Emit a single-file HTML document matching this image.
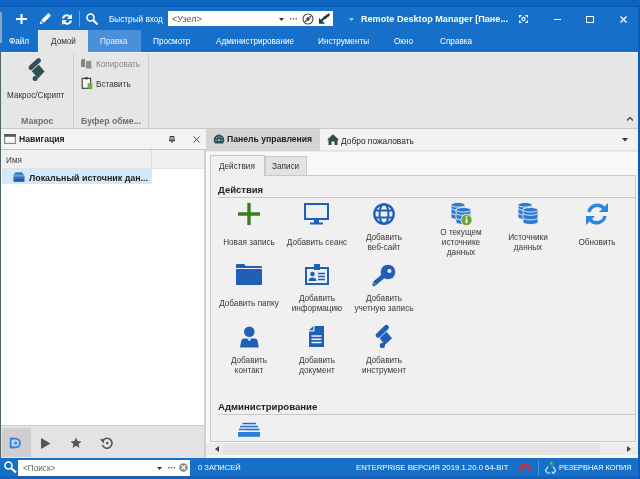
<!DOCTYPE html>
<html><head><meta charset="utf-8">
<style>
*{margin:0;padding:0;box-sizing:border-box}
html,body{width:640px;height:479px;overflow:hidden;background:#e9e9e9;font-family:"Liberation Sans",sans-serif;font-size:8.2px;color:#333}
div,svg,span{position:absolute}
.t{white-space:nowrap;line-height:10px;will-change:transform}
.w{color:#fff}
.b{font-weight:bold}
.c{text-align:center}
</style></head><body>
<!-- top strip & title bar -->
<div style="left:0;top:0;width:640px;height:7px;background:#0b63c2"></div><div style="left:0;top:6px;width:640px;height:1px;background:#0a5ab4"></div>
<div style="left:0;top:7px;width:640px;height:45px;background:#1670ca"></div>
<div style="left:0;top:12px;width:2px;height:31px;background:#8aa4c0"></div>

<!-- QAT icons -->
<svg style="left:16px;top:14px" width="11" height="10" viewBox="0 0 11 10"><path d="M5.5 0v10M0 5h11" stroke="#fff" stroke-width="2"/></svg>
<svg style="left:39px;top:13px" width="12" height="11" viewBox="0 0 12 11"><path d="M2.2 7.2L8.6 0.8a1.2 1.2 0 0 1 1.7 0l0.9 0.9a1.2 1.2 0 0 1 0 1.7L4.8 9.8z" fill="#fff"/><path d="M1.6 8L4 10.4 0.6 11z" fill="#fff"/></svg>
<svg style="left:61px;top:14px" width="12" height="11" viewBox="0 0 12 11"><path d="M2 4.5A4 4 0 0 1 9.5 3.5M10 6.5A4 4 0 0 1 2.5 7.5" stroke="#fff" stroke-width="2" fill="none"/><path d="M11 0v5h-5z M1 11v-5h5z" fill="#fff"/></svg>
<div style="left:79px;top:11px;width:1px;height:16px;background:#6aa3dc"></div>
<svg style="left:86px;top:13px" width="12" height="12" viewBox="0 0 12 12"><circle cx="4.5" cy="4.5" r="3.5" stroke="#fff" stroke-width="1.6" fill="none"/><path d="M7 7l4.5 4.5" stroke="#fff" stroke-width="2.2"/></svg>
<div class="t w" style="left:108.5px;top:14.5px">Быстрый вход</div>
<!-- combo -->
<div style="left:168px;top:11px;width:165px;height:15px;background:#fff"></div>
<div class="t" style="left:172px;top:14px;color:#555;font-size:9px">&lt;Узел&gt;</div>
<svg style="left:279px;top:17.5px" width="5" height="3"><path d="M0 0h5l-2.5 3z" fill="#333"/></svg>
<svg style="left:290px;top:18px" width="7" height="2"><path d="M0 0h1.4v1.4h-1.4zM2.8 0h1.4v1.4h-1.4zM5.6 0h1.4v1.4h-1.4z" fill="#666"/></svg>
<svg style="left:302px;top:13px" width="12" height="12" viewBox="0 0 12 12"><circle cx="6" cy="6" r="5" stroke="#444" stroke-width="1.1" fill="none"/><path d="M3.2 8.8l1.3-1.3M4 6.2a1.3 1.3 0 0 1 1.8 1.8M8.8 3.2L7.5 4.5M8 5.8a1.3 1.3 0 0 1-1.8-1.8" stroke="#222" stroke-width="1.3" fill="none"/></svg>
<svg style="left:318px;top:13px" width="12" height="11" viewBox="0 0 12 11"><path d="M11.3 1L9.5 3.2 8.8 2.8 7.5 4.6 6.8 4.3 3.8 7.6" stroke="#1f3f3f" stroke-width="2.2" fill="none"/><path d="M1 4.8v6h6z" fill="#1f3f3f"/></svg>
<svg style="left:349px;top:18px" width="5" height="3"><path d="M0 0h5l-2.5 3z" fill="#a8cdf2"/></svg>
<div class="t w b" style="left:361px;top:14px;font-size:9.1px">Remote Desktop Manager [Пане...</div>
<!-- window buttons -->
<svg style="left:519px;top:15px" width="9" height="8" viewBox="0 0 9 8"><path d="M0.6 2.6V0.6H2.6M6.4 0.6h2v2M8.4 5.4v2h-2M2.6 7.4H0.6v-2" stroke="#fff" stroke-width="1.2" fill="none"/><circle cx="4.5" cy="4" r="1.6" stroke="#fff" stroke-width="1.1" fill="none"/></svg>
<div style="left:554px;top:19px;width:7px;height:1px;background:#fff"></div>
<div style="left:586px;top:15.5px;width:7.5px;height:7.5px;border:1.2px solid #fff"></div>
<svg style="left:619.5px;top:15.5px" width="7" height="7" viewBox="0 0 7 7"><path d="M0.5 0.5l6 6M6.5 0.5l-6 6" stroke="#fff" stroke-width="1.3"/></svg>

<!-- ribbon tabs -->
<div style="left:38px;top:30px;width:50px;height:22px;background:#e6e6e6;border-left:1px solid #eaf4fd"></div>
<div style="left:88px;top:30px;width:53px;height:22px;background:#4a90d8"></div>
<div class="t w" style="left:9px;top:37px">Файл</div>
<div class="t" style="left:51px;top:37px;color:#333">Домой</div>
<div class="t" style="left:100px;top:37px;color:#e4eef9">Правка</div>
<div class="t w" style="left:153px;top:37px">Просмотр</div>
<div class="t w" style="left:215.5px;top:37px">Администрирование</div>
<div class="t w" style="left:318px;top:37px">Инструменты</div>
<div class="t w" style="left:394px;top:37px">Окно</div>
<div class="t w" style="left:439.5px;top:37px">Справка</div>

<!-- ribbon body -->
<div style="left:0;top:52px;width:638px;height:77px;background:#e6e6e6;border-bottom:1px solid #c8c8c8"></div><div style="left:0;top:52px;width:38px;height:1px;background:#eaf4fd"></div><div style="left:88px;top:52px;width:550px;height:1px;background:#eaf4fd"></div>
<svg style="left:627px;top:117px" width="6" height="4"><path d="M0 3.5L3 0.5 6 3.5" stroke="#444" stroke-width="1.3" fill="none"/></svg>

<div style="left:73px;top:54px;width:1px;height:74px;background:#cdcdcd"></div>
<div style="left:148px;top:54px;width:1px;height:74px;background:#cdcdcd"></div>
<svg style="left:24px;top:55px" width="26" height="30" viewBox="0 0 26 30"><g fill="#2e5252"><path d="M7.6 16L14.7 9.4 20.5 16.6 14 23.4z"/><circle cx="11.1" cy="23.5" r="2.5"/></g><path d="M7 12.6L14.6 5.6" stroke="#e6e6e6" stroke-width="6" stroke-linecap="round"/><path d="M7 12.6L14.6 5.6" stroke="#2e5252" stroke-width="4.8" stroke-linecap="round"/></svg>
<div class="t" style="left:7px;top:91px">Макрос/Скрипт</div>
<div class="t b" style="left:21px;top:116px;color:#707070;font-size:8.9px">Макрос</div>
<svg style="left:81px;top:59px" width="11" height="10" viewBox="0 0 11 10"><path d="M0 2a2 2 0 0 1 2-2h2v8h-4z" fill="#858585"/><path d="M4.5 3.5a2 2 0 0 1 2-2h4.3v8.4h-6.3z" fill="#8e8e8e" stroke="#e6e6e6" stroke-width="0.8"/></svg>
<div class="t" style="left:96px;top:60px;color:#888">Копировать</div>
<svg style="left:81px;top:77px" width="12" height="12" viewBox="0 0 12 12"><rect x="1.2" y="1.3" width="8.4" height="10" fill="#f4f4f4" stroke="#3a3a3a" stroke-width="1.1"/><rect x="3.8" y="0.3" width="3.2" height="2" fill="#3a3a3a"/><rect x="6.6" y="6.2" width="4.8" height="5.4" fill="#6ab440"/></svg>
<div class="t" style="left:96px;top:80px;color:#333">Вставить</div>
<div class="t b" style="left:81px;top:116px;color:#707070;font-size:8.7px">Буфер обме...</div>

<!-- navigation panel -->
<div style="left:0;top:129px;width:204px;height:329px;background:#fff"></div>
<div style="left:0;top:129px;width:206px;height:21px;background:#f3f3f3;border-bottom:1px solid #c4c4c4"></div>
<svg style="left:4px;top:134px" width="12" height="10" viewBox="0 0 12 10"><rect x="0.6" y="1" width="10.8" height="8.4" fill="#fafafa" stroke="#8a8a8a" stroke-width="1.2"/><rect x="0" y="0" width="12" height="2.8" fill="#5a5a5a"/></svg>
<div class="t b" style="left:19px;top:134px;color:#222;font-size:8.6px">Навигация</div>
<svg style="left:169px;top:136px" width="6" height="7" viewBox="0 0 6 7"><path d="M1 0.5h4v3.8h-4z" fill="none" stroke="#333" stroke-width="1"/><path d="M0 4.2h6v1h-6z" fill="#333"/><path d="M2.5 5h1v2h-1z" fill="#333"/><path d="M3 0.5v3.8" stroke="#333" stroke-width="0.8"/></svg>
<svg style="left:193px;top:136px" width="7" height="7" viewBox="0 0 7 7"><path d="M0.5 0.5l6 6M6.5 0.5l-6 6" stroke="#444" stroke-width="1"/></svg>
<div style="left:0;top:150px;width:204px;height:19px;background:#f0f0f0;border-bottom:1px solid #e2e2e2"></div>
<div style="left:151px;top:150px;width:1px;height:19px;background:#dcdcdc"></div>
<div class="t" style="left:6px;top:156px;color:#444">Имя</div>
<div style="left:2px;top:169px;width:150px;height:15px;background:#d3e9f9"></div>
<svg style="left:13px;top:172px" width="12" height="10" viewBox="0 0 12 10"><path d="M2.5 0.3h6.5l2.5 3.5h-11.5z" fill="#4a86cc"/><path d="M3 1.5h6" stroke="#2a5fa8" stroke-width="0.6"/><rect x="0.5" y="4.3" width="11" height="5.5" fill="#1f5bb0"/><rect x="0.5" y="5.6" width="11" height="0.6" fill="#6fa0dc"/></svg>
<div class="t b" style="left:29px;top:173px;color:#222;font-size:8.9px">Локальный источник дан...</div>
<div style="left:0;top:425px;width:204px;height:33px;background:#e3e3e3;border-top:1px solid #cdcdcd"></div>
<div style="left:2px;top:428px;width:29px;height:29px;background:#cfcfcf"></div>
<svg style="left:9px;top:437px" width="13" height="12" viewBox="0 0 13 12"><path d="M1.6 1.6h5a4.4 4.4 0 0 1 0 8.8h-5z" fill="#b5d5f5" stroke="#3a80d8" stroke-width="1.8"/><circle cx="6.6" cy="6" r="1.5" fill="#3a80d8"/><path d="M1.6 1.6h3M1.6 10.4h3" stroke="#3a80d8" stroke-width="1.8"/></svg>
<svg style="left:41px;top:438px" width="10" height="11" viewBox="0 0 10 11"><path d="M0 0l9.5 5.5-9.5 5.5z" fill="#555"/></svg>
<svg style="left:70px;top:437px" width="12" height="12" viewBox="0 0 24 24"><path d="M12 1l3.2 7.2 7.8.7-5.9 5.2 1.8 7.7-6.9-4.1-6.9 4.1 1.8-7.7-5.9-5.2 7.8-.7z" fill="#555"/></svg>
<svg style="left:100px;top:437px" width="13" height="12" viewBox="0 0 13 12"><path d="M3 3.2A5 5 0 1 1 2.3 8" stroke="#555" stroke-width="1.6" fill="none"/><path d="M0 2l4.5 0.5-1 4z" fill="#555"/><circle cx="7.3" cy="6" r="1.3" fill="#555"/></svg>

<!-- splitter -->
<div style="left:204px;top:150px;width:2px;height:308px;background:#cfcfcf"></div>

<!-- dashboard -->
<div style="left:206px;top:129px;width:432px;height:22px;background:#f2f2f2;border-bottom:1px solid #e2e2e2"></div>
<div style="left:206px;top:129px;width:114px;height:22px;background:#d4d4d4"></div>
<svg style="left:213px;top:134px" width="12" height="10" viewBox="0 0 12 10"><path d="M2.2 9.6A5.3 5.3 0 1 1 9.8 9.6z" fill="#2a5252"/><g fill="#bfe0e0"><circle cx="6" cy="6.3" r="1"/><rect x="2.3" y="5.8" width="1.5" height="0.9"/><rect x="8.2" y="5.8" width="1.5" height="0.9"/><rect x="5.5" y="2.3" width="1" height="1.2"/><rect x="3.2" y="3.3" width="1" height="1"/><rect x="7.8" y="3.3" width="1" height="1"/></g></svg>
<div class="t b" style="left:227px;top:134px;color:#222;font-size:8.65px">Панель управления</div>
<svg style="left:327px;top:134px" width="12" height="11" viewBox="0 0 12 11"><path d="M6 0.3L11.7 5.6 10.5 6.4 10.5 11 7.5 11 7.5 7.6 4.5 7.6 4.5 11 1.5 11 1.5 6.4 0.3 5.6z" fill="#2a4f4f"/></svg>
<div class="t" style="left:341px;top:136px;color:#222;font-size:8.4px">Добро пожаловать</div>
<svg style="left:622px;top:138px" width="6" height="4"><path d="M0 0h6l-3 3.5z" fill="#333"/></svg>

<div style="left:206px;top:152px;width:432px;height:306px;background:#f8f8f8"></div>
<!-- tab control -->
<div style="left:210px;top:175px;width:426px;height:267px;background:#f0f0f0;border:1px solid #c8c8c8"></div>
<div style="left:265px;top:156px;width:42px;height:20px;background:#e2e2e2;border:1px solid #c8c8c8"></div>
<div style="left:210px;top:155px;width:55px;height:21px;background:#f0f0f0;border:1px solid #c8c8c8;border-bottom:none"></div>
<div class="t" style="left:219px;top:162px;color:#333">Действия</div>
<div class="t" style="left:272px;top:162px;color:#333">Записи</div>

<div class="t b" style="left:218px;top:185px;color:#222;font-size:9.5px">Действия</div>
<div style="left:218px;top:197px;width:417px;height:1px;background:#c8c8c8"></div>

<!-- row1 icons -->
<svg style="left:238px;top:203px" width="22" height="22" viewBox="0 0 22 22"><path d="M11 0v22M0 11h22" stroke="#3a7f1f" stroke-width="3.4"/></svg>
<svg style="left:304px;top:203px" width="25" height="22" viewBox="0 0 25 22"><rect x="1" y="1" width="23" height="15" fill="none" stroke="#1f5fb8" stroke-width="2"/><rect x="10" y="17" width="5" height="3" fill="#1f5fb8"/><rect x="6" y="19.5" width="13" height="2" fill="#1f5fb8"/></svg>
<svg style="left:373px;top:203px" width="22" height="22" viewBox="0 0 22 22"><circle cx="11" cy="11" r="9.7" fill="none" stroke="#1f5fb8" stroke-width="2.3"/><ellipse cx="11" cy="11" rx="4.5" ry="9.7" fill="none" stroke="#1f5fb8" stroke-width="2"/><path d="M2 7.5h18M2 14.5h18" stroke="#1f5fb8" stroke-width="2"/></svg>
<svg style="left:449px;top:201px" width="26" height="26" viewBox="0 0 26 26"><path d="M2 13.00v3.2a7.0 2.3 0 0 0 14 0v-3.2a7.0 2.3 0 0 0 -14 0z" fill="#2a7ad0" stroke="#f0f0f0" stroke-width="0.9"/><path d="M2 8.40v3.2a7.0 2.3 0 0 0 14 0v-3.2a7.0 2.3 0 0 0 -14 0z" fill="#2a7ad0" stroke="#f0f0f0" stroke-width="0.9"/><path d="M2 3.80v3.2a7.0 2.3 0 0 0 14 0v-3.2a7.0 2.3 0 0 0 -14 0z" fill="#2a7ad0" stroke="#f0f0f0" stroke-width="0.9"/><ellipse cx="9.0" cy="3.80" rx="7.0" ry="2.3" fill="#2a7ad0" stroke="#f0f0f0" stroke-width="0.9"/><path d="M7 18.00v3.2a7.5 2.3 0 0 0 15 0v-3.2a7.5 2.3 0 0 0 -15 0z" fill="#2a7ad0" stroke="#f0f0f0" stroke-width="0.9"/><path d="M7 13.40v3.2a7.5 2.3 0 0 0 15 0v-3.2a7.5 2.3 0 0 0 -15 0z" fill="#2a7ad0" stroke="#f0f0f0" stroke-width="0.9"/><path d="M7 8.80v3.2a7.5 2.3 0 0 0 15 0v-3.2a7.5 2.3 0 0 0 -15 0z" fill="#2a7ad0" stroke="#f0f0f0" stroke-width="0.9"/><ellipse cx="14.5" cy="8.80" rx="7.5" ry="2.3" fill="#2a7ad0" stroke="#f0f0f0" stroke-width="0.9"/><circle cx="17.5" cy="19" r="6" fill="#f0f0f0"/><circle cx="17.5" cy="19" r="5.2" fill="#6aa632"/><rect x="16.7" y="17.6" width="1.7" height="4.4" fill="#fff"/><rect x="16.7" y="15.3" width="1.7" height="1.5" fill="#fff"/></svg>
<svg style="left:516px;top:201px" width="26" height="26" viewBox="0 0 26 26"><path d="M2 13.00v3.2a7.0 2.3 0 0 0 14 0v-3.2a7.0 2.3 0 0 0 -14 0z" fill="#2a7ad0" stroke="#f0f0f0" stroke-width="0.9"/><path d="M2 8.40v3.2a7.0 2.3 0 0 0 14 0v-3.2a7.0 2.3 0 0 0 -14 0z" fill="#2a7ad0" stroke="#f0f0f0" stroke-width="0.9"/><path d="M2 3.80v3.2a7.0 2.3 0 0 0 14 0v-3.2a7.0 2.3 0 0 0 -14 0z" fill="#2a7ad0" stroke="#f0f0f0" stroke-width="0.9"/><ellipse cx="9.0" cy="3.80" rx="7.0" ry="2.3" fill="#2a7ad0" stroke="#f0f0f0" stroke-width="0.9"/><path d="M7 18.00v3.2a7.5 2.3 0 0 0 15 0v-3.2a7.5 2.3 0 0 0 -15 0z" fill="#2a7ad0" stroke="#f0f0f0" stroke-width="0.9"/><path d="M7 13.40v3.2a7.5 2.3 0 0 0 15 0v-3.2a7.5 2.3 0 0 0 -15 0z" fill="#2a7ad0" stroke="#f0f0f0" stroke-width="0.9"/><path d="M7 8.80v3.2a7.5 2.3 0 0 0 15 0v-3.2a7.5 2.3 0 0 0 -15 0z" fill="#2a7ad0" stroke="#f0f0f0" stroke-width="0.9"/><ellipse cx="14.5" cy="8.80" rx="7.5" ry="2.3" fill="#2a7ad0" stroke="#f0f0f0" stroke-width="0.9"/></svg>
<svg style="left:585px;top:203px" width="24" height="22" viewBox="0 0 24 22"><path d="M4 9A8.5 8.5 0 0 1 19 5.5M20 13A8.5 8.5 0 0 1 5 16.5" stroke="#2a86de" stroke-width="3.4" fill="none"/><path d="M23 0v9h-9z M1 22v-9h9z" fill="#2a86de"/></svg>

<div class="t c" style="left:208px;top:238px;width:82px;color:#383838">Новая запись</div>
<div class="t c" style="left:276px;top:238px;width:82px;color:#383838">Добавить сеанс</div>
<div class="t c" style="left:343px;top:233px;width:82px;color:#383838">Добавить<br>веб-сайт</div>
<div class="t c" style="left:420px;top:228px;width:82px;color:#383838">О текущем<br>источнике<br>данных</div>
<div class="t c" style="left:487px;top:233px;width:82px;color:#383838">Источники<br>данных</div>
<div class="t c" style="left:556px;top:238px;width:82px;color:#383838">Обновить</div>

<!-- row2 icons -->
<svg style="left:236px;top:264px" width="26" height="21" viewBox="0 0 26 21"><path d="M0 1a1 1 0 0 1 1-1h7l2 2h15a1 1 0 0 1 1 1v1h-26z" fill="#1f5fb8"/><rect x="0" y="5" width="26" height="16" rx="1" fill="#1f5fb8"/></svg>
<svg style="left:305px;top:264px" width="24" height="21" viewBox="0 0 24 21"><rect x="1" y="4" width="22" height="16" fill="none" stroke="#1f5fb8" stroke-width="2"/><rect x="9" y="0" width="6" height="6" fill="#1f5fb8"/><circle cx="7.5" cy="10" r="2.3" fill="#1f5fb8"/><path d="M3.5 17a4 3.5 0 0 1 8 0z" fill="#1f5fb8"/><path d="M13 9.5h7M13 12.5h7M13 15.5h7" stroke="#1f5fb8" stroke-width="1.6"/></svg>
<svg style="left:368px;top:260px" width="32" height="30" viewBox="0 0 32 30"><circle cx="20" cy="12" r="7.3" fill="#1f5fb8"/><path d="M16 15.5L6.5 23.5" stroke="#1f5fb8" stroke-width="4.6"/><path d="M4.8 22.2l3.2 3.8-2.8 0.3-0.8-1z" fill="#1f5fb8"/><circle cx="21.4" cy="11" r="2.1" fill="#f0f0f0"/></svg>

<div class="t c" style="left:208px;top:299px;width:82px;color:#383838">Добавить папку</div>
<div class="t c" style="left:276px;top:294px;width:82px;color:#383838">Добавить<br>информацию</div>
<div class="t c" style="left:343px;top:294px;width:82px;color:#383838">Добавить<br>учетную запись</div>

<!-- row3 icons -->
<svg style="left:240px;top:326px" width="19" height="22" viewBox="0 0 19 22"><circle cx="9.3" cy="5.8" r="5.3" fill="#1f5fb8"/><path d="M0 21.4L1.2 15a3 3 0 0 1 3-2.4h10.4a3 3 0 0 1 3 2.4L18.8 21.4z" fill="#1f5fb8"/><path d="M7 12.6l2.3 2.6 2.3-2.6z" fill="#f0f0f0"/></svg>
<svg style="left:309px;top:326px" width="16" height="22" viewBox="0 0 16 22"><path d="M5.5 0H15v21H0V5.5h5.5z" fill="#1f5fb8"/><path d="M0 4.3L4.3 0v4.3z" fill="#1f5fb8"/><path d="M2.5 10h10M2.5 13.3h10M2.5 16.6h10" stroke="#f0f0f0" stroke-width="1.5"/></svg>
<svg style="left:370px;top:320px" width="26" height="32" viewBox="0 0 26 32"><g fill="#1f5fb8"><path d="M9.2 17.6L16.3 11.4 22 18.3 14.8 25z"/><circle cx="12.4" cy="25.4" r="2.6"/></g><path d="M8.2 15.2L16.4 7.4" stroke="#f0f0f0" stroke-width="6.2" stroke-linecap="round"/><path d="M8.2 15.2L16.4 7.4" stroke="#1f5fb8" stroke-width="5" stroke-linecap="round"/></svg>

<div class="t c" style="left:208px;top:356px;width:82px;color:#383838">Добавить<br>контакт</div>
<div class="t c" style="left:276px;top:356px;width:82px;color:#383838">Добавить<br>документ</div>
<div class="t c" style="left:343px;top:356px;width:82px;color:#383838">Добавить<br>инструмент</div>

<div class="t b" style="left:218px;top:402px;color:#222;font-size:9.6px">Администрирование</div>
<div style="left:218px;top:414px;width:417px;height:1px;background:#c8c8c8"></div>
<svg style="left:238px;top:420px" width="23" height="18" viewBox="0 0 23 18"><g fill="#2a6cbf"><rect x="4.4" y="2.8" width="13.6" height="1.5"/><rect x="2" y="5.8" width="18" height="1.5"/><rect x="0.9" y="8.7" width="20.5" height="1.5"/></g><g fill="#9cc8f0"><rect x="10" y="4.3" width="8" height="0.8"/><rect x="8" y="7.3" width="12" height="0.8"/><rect x="8" y="10.2" width="13.4" height="0.8"/></g><rect x="0" y="12" width="22" height="4.8" fill="#2a80dc"/></svg>

<!-- horizontal scrollbar -->
<div style="left:206px;top:443px;width:432px;height:12px;background:#e4e4e4"></div>
<div style="left:206px;top:443px;width:17px;height:12px;background:#ececec"></div>
<div style="left:600px;top:443px;width:38px;height:12px;background:#ececec"></div>
<svg style="left:215px;top:446px" width="4" height="6"><path d="M4 0v6l-4-3z" fill="#444"/></svg>
<svg style="left:627px;top:446px" width="4" height="6"><path d="M0 0v6l4-3z" fill="#444"/></svg>

<!-- status bar -->
<div style="left:0;top:458px;width:640px;height:21px;background:#1670ca"></div>
<div style="left:0;top:476px;width:640px;height:3px;background:#1662b8"></div>
<svg style="left:4px;top:461px" width="13" height="12" viewBox="0 0 13 12"><circle cx="4.5" cy="4.5" r="3.5" stroke="#fff" stroke-width="1.6" fill="none"/><path d="M7 7l5 4.5" stroke="#fff" stroke-width="2.2"/></svg>
<div style="left:18px;top:460px;width:172px;height:16px;background:#fff"></div>
<div class="t" style="left:23px;top:464px;color:#666">&lt;Поиск&gt;</div>
<svg style="left:157px;top:466.5px" width="5" height="3"><path d="M0 0h5l-2.5 3z" fill="#333"/></svg>
<svg style="left:168px;top:467px" width="7" height="2"><path d="M0 0h1.4v1.4h-1.4zM2.8 0h1.4v1.4h-1.4zM5.6 0h1.4v1.4h-1.4z" fill="#666"/></svg>
<svg style="left:179px;top:463px" width="9" height="9" viewBox="0 0 9 9"><circle cx="4.5" cy="4.5" r="4.3" fill="#8a8a8a"/><path d="M2.5 2.5l4 4M6.5 2.5l-4 4" stroke="#fff" stroke-width="1.2"/></svg>
<div class="t w" style="left:198px;top:463px;font-size:7.6px">0 ЗАПИСЕЙ</div>
<div class="t w" style="left:356px;top:463px;font-size:7.75px">ENTERPRISE ВЕРСИЯ 2019.1.20.0 64-BIT</div>
<svg style="left:519px;top:463px" width="12" height="9" viewBox="0 0 12 9"><path d="M0.5 8.5V5.5A5.5 5.2 0 0 1 11.5 5.5v3h-3.2V5.5a2.3 2.3 0 0 0-4.6 0v3z" fill="#c8303c"/><path d="M0.5 7h3.2v1.5h-3.2zM8.3 7h3.2v1.5h-3.2z" fill="#7a4a5a"/></svg>
<div style="left:538px;top:460px;width:1px;height:16px;background:#4a8fd6"></div>
<svg style="left:544px;top:461px" width="13" height="13" viewBox="0 0 13 13"><path d="M6.5 0.5c2 0.3 2.5 2 2 3.5-1.5 0.3-3-0.5-2-3.5z" fill="#6cbf3a"/><path d="M4 5.5L1.5 9.5 3.5 12h3M9 5.5l2.5 4-1.5 2.5h-2" stroke="#d8ecff" stroke-width="1.2" fill="none"/><path d="M8 10.5l1.8 1.8M9.8 10.5L8 12.3" stroke="#d8ecff" stroke-width="0.9"/></svg>
<div class="t w" style="left:559px;top:463px;font-size:7.4px">РЕЗЕРВНАЯ КОПИЯ</div>

<!-- right edge -->
<div style="left:0;top:52px;width:1px;height:406px;background:#4f6664"></div>
<div style="left:638px;top:7px;width:2px;height:472px;background:#0b5cb8"></div>
</body></html>
